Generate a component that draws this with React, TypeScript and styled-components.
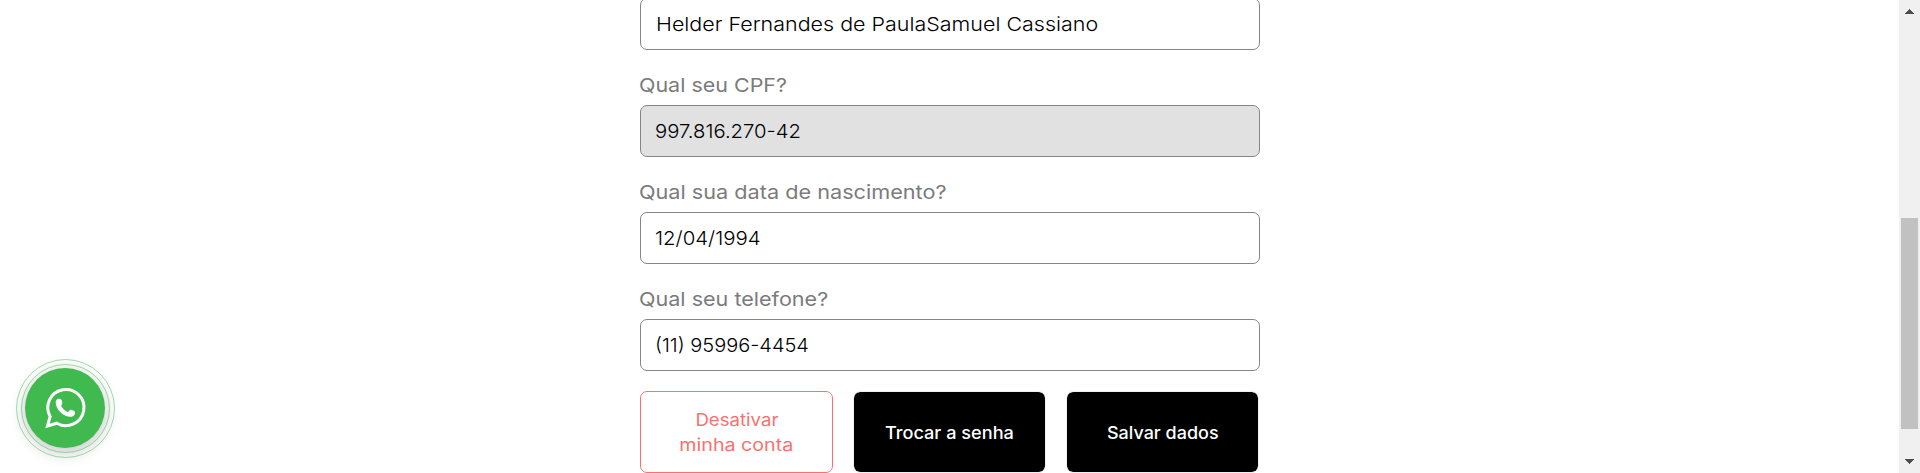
import React from "react";
import styled, { createGlobalStyle, css } from "styled-components";

const GlobalStyle = createGlobalStyle`
  *, *::before, *::after { box-sizing: border-box; }
  html, body { margin: 0; height: 100%; overflow: hidden; background: #fff; }
  body { font-family: Inter, "Open Sans", sans-serif; }
`;

const Page = styled.div`
  display: flex;
  height: 473px;
  overflow: hidden;
  background: #fff;
`;

const Main = styled.main`
  flex: 1;
  display: flex;
  justify-content: center;
  align-items: flex-start;
  padding-left: 1px;
`;

const Form = styled.form`
  width: 620px;
  margin-top: -2px;
  display: flex;
  flex-direction: column;
`;

const Field = styled.div`
  display: flex;
  flex-direction: column;
  margin-bottom: 20px;
`;

const Label = styled.label`
  height: 35px;
  margin-left: -1px;
  padding-top: 3px;
  font-size: 19.25px;
  line-height: 24px;
  font-weight: 400;
  color: #7b7b7b;
`;

const Value = styled.div<{ $disabled?: boolean; $numeric?: boolean }>`
  height: 52px;
  padding: 0 ${(p) => (p.$numeric ? 14 : 15)}px;
  display: flex;
  align-items: center;
  border: 1px solid #858585;
  border-radius: 7px;
  background: ${(p) => (p.$disabled ? "#e1e1e1" : "#fff")};
  font-size: 19.25px;
  font-weight: 300;
  color: #000;
`;

const WideText = styled.span<{ $stretch: number; $centered?: boolean }>`
  display: inline-block;
  white-space: nowrap;
  transform: scaleX(${(p) => p.$stretch});
  transform-origin: ${(p) => (p.$centered ? "center" : "left center")};
`;

const Actions = styled.div`
  display: flex;
  gap: 20px;
`;

const Button = styled.button<{ $outline?: boolean }>`
  width: 193px;
  height: 82px;
  padding: 2px 0 0;
  display: flex;
  flex-direction: column;
  align-items: center;
  justify-content: center;
  border-radius: 7px;
  font-family: inherit;
  font-size: 17px;
  line-height: 25px;
  ${(p) =>
    p.$outline
      ? css`
          border: 1px solid #fa7070;
          background: #fff;
          color: #fa7070;
          font-weight: 400;
        `
      : css`
          border: 1px solid #efeff4;
          background: #000;
          background-clip: padding-box;
          color: #fff;
          font-weight: 500;
        `}
`;

const Scrollbar = styled.aside`
  width: 21px;
  height: 473px;
  padding: 9px 2px;
  display: flex;
  flex-direction: column;
  align-items: center;
  background: #f0f0f0;
`;

const Arrow = styled.svg`
  display: block;
  width: 9px;
  height: 5px;
  fill: #4d4d4d;
`;

const Thumb = styled.div`
  width: 17px;
  height: 211px;
  margin: 204px 0 30px;
  background: #c1c1c1;
`;

const WhatsApp = styled.a`
  position: fixed;
  left: 25px;
  top: 368px;
  width: 80px;
  height: 80px;
  border-radius: 50%;
  background: #40ba4f;
  box-shadow: 0 4px 16px rgba(0, 0, 0, 0.24);

  &::before,
  &::after {
    content: "";
    position: absolute;
    border-radius: 50%;
    border: 1px solid rgba(64, 186, 79, 0.5);
  }
  &::before { inset: -4px -5px -5px -4px; }
  &::after { inset: -9px -10px -10px -9px; }
`;

const WhatsAppIcon = styled.svg`
  display: block;
  width: 80px;
  height: 80px;
`;

const fields = [
  { value: "Helder Fernandes de PaulaSamuel Cassiano", valueStretch: 1.115 },
  { label: "Qual seu CPF?", labelStretch: 1.115, value: "997.816.270-42", valueStretch: 1.052, numeric: true, disabled: true },
  { label: "Qual sua data de nascimento?", labelStretch: 1.125, value: "12/04/1994", valueStretch: 1.06, numeric: true },
  { label: "Qual seu telefone?", labelStretch: 1.12, value: "(11) 95996-4454", valueStretch: 1.039, numeric: true },
];

export default function App() {
  return (
    <>
      <GlobalStyle />
      <Page>
        <Main>
          <Form>
            {fields.map((f) => (
              <Field key={f.value}>
                {f.label && (
                  <Label>
                    <WideText $stretch={f.labelStretch ?? 1}>{f.label}</WideText>
                  </Label>
                )}
                <Value $disabled={f.disabled} $numeric={f.numeric}>
                  <WideText $stretch={f.valueStretch}>{f.value}</WideText>
                </Value>
              </Field>
            ))}
            <Actions>
              <Button type="button" $outline>
                <WideText $centered $stretch={1.095}>Desativar</WideText>
                <WideText $centered $stretch={1.155}>minha conta</WideText>
              </Button>
              <Button type="button">
                <WideText $centered $stretch={1.067}>Trocar a senha</WideText>
              </Button>
              <Button type="button">
                <WideText $centered $stretch={1.057}>Salvar dados</WideText>
              </Button>
            </Actions>
          </Form>
        </Main>
        <Scrollbar>
          <Arrow viewBox="0 0 9 5" shapeRendering="crispEdges">
            <path d="M4 0h1v1h1v1h1v1h1v1h1v1H0V4h1V3h1V2h1V1h1z" />
          </Arrow>
          <Thumb />
          <Arrow viewBox="0 0 9 5" shapeRendering="crispEdges">
            <path d="M0 0h9v1H8v1H7v1H6v1H5v1H4V4H3V3H2V2H1V1H0z" />
          </Arrow>
        </Scrollbar>
      </Page>
      <WhatsApp aria-label="WhatsApp">
        <WhatsAppIcon viewBox="75 84 240 240">
          <path
            d="M142.500 258L150.500 229.500A54.300 54.300 0 1 1 170.500 249.600Z"
            fill="none"
            stroke="#fff"
            strokeWidth="9"
            strokeLinejoin="miter"
          />
          <path
            d="M167 187C167.500 180 171 176 177 176C182 175.500 185 178 186 184C187.500 190 187 193 183.500 197C187 205 195 213 204.500 216.500C207 212 210 208.500 214 209.500L221 212C225 213.500 226 217 225 221C223 227 217 231 209 230.500C188 229 167 207 167 187Z"
            fill="#fff"
          />
        </WhatsAppIcon>
      </WhatsApp>
    </>
  );
}
